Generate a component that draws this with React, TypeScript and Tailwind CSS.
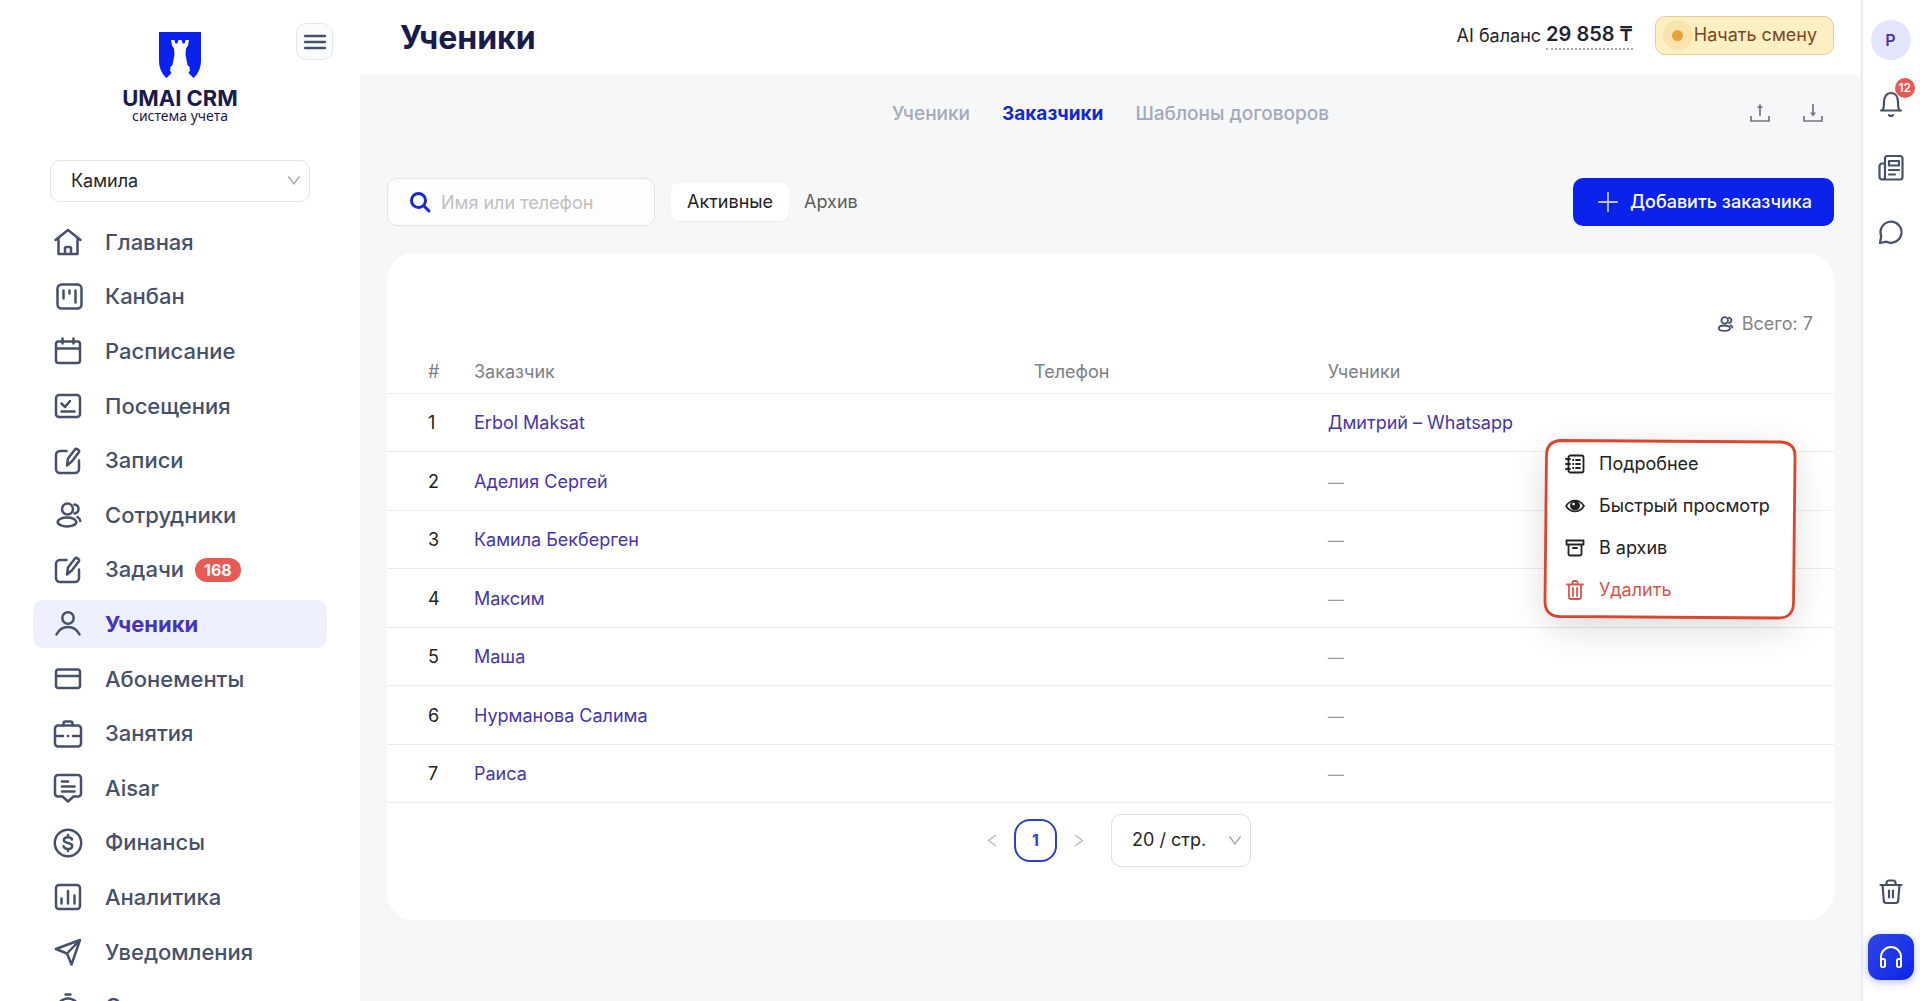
import { useState, type ReactNode } from 'react';

const NAV_ITEMS: { label: string; icon: ReactNode; badge?: number }[] = [
  {
    label: 'Главная',
    icon: <path d="M2.5 13 15 3l12.5 10M5.5 11.5V27h19V11.5M12 27v-5.5a1.5 1.5 0 0 1 1.5-1.5h3a1.5 1.5 0 0 1 1.5 1.5V27" />,
  },
  {
    label: 'Канбан',
    icon: (
      <>
        <rect x="4.5" y="2.5" width="24" height="24" rx="4" />
        <path d="M10.5 8.5v8M16.5 8.5v3M22.5 8.5v12" />
      </>
    ),
  },
  {
    label: 'Расписание',
    icon: (
      <>
        <rect x="3" y="5.5" width="24" height="21.5" rx="2.5" />
        <path d="M3 12.5h24M9.5 2.5v5M20.5 2.5v5" />
      </>
    ),
  },
  {
    label: 'Посещения',
    icon: (
      <>
        <rect x="3" y="4" width="24" height="22" rx="3" />
        <path d="m8.5 12.5 3.5 3.5 5-6M8.5 20.5h13" />
      </>
    ),
  },
  { label: 'Записи', icon: <EditPaths /> },
  { label: 'Сотрудники', icon: <UsersPaths /> },
  { label: 'Задачи', icon: <EditPaths />, badge: 168 },
  {
    label: 'Ученики',
    icon: (
      <>
        <circle cx="15" cy="9" r="5.7" />
        <path d="M3.5 25.5c2.5-5 7-7.5 11.5-7.5s9 2.5 11.5 7.5" />
      </>
    ),
  },
  {
    label: 'Абонементы',
    icon: (
      <>
        <rect x="3" y="5.5" width="24" height="18.5" rx="2.5" />
        <path d="M3 12h24" />
      </>
    ),
  },
  {
    label: 'Занятия',
    icon: (
      <>
        <rect x="2" y="6.5" width="26" height="21" rx="3" />
        <path d="M10.5 6.5V4.5a2 2 0 0 1 2-2h5a2 2 0 0 1 2 2v2M2.5 17H10M20 17h7.5M14.8 17h.4" />
      </>
    ),
  },
  {
    label: 'Aisar',
    icon: (
      <path d="M5 2h20a3 3 0 0 1 3 3v15.5a3 3 0 0 1-3 3h-4.5L15 28.5l-5.5-5H5a3 3 0 0 1-3-3V5a3 3 0 0 1 3-3ZM9 8.5h6M9 13.5h12.5M9 18.5h12.5" />
    ),
  },
  {
    label: 'Финансы',
    icon: (
      <>
        <circle cx="15" cy="15" r="13.2" />
        <path d="M19 11.5c-.5-1.5-2-2.3-4-2.3-2.5 0-4.2 1.1-4.2 2.9 0 4 8.4 1.8 8.4 5.8 0 1.9-1.8 3-4.2 3-2.200 0-3.900-.9-4.400-2.600M15 7v2M15 21v2" />
      </>
    ),
  },
  {
    label: 'Аналитика',
    icon: (
      <>
        <rect x="3" y="3" width="24" height="24" rx="3" />
        <path d="M8.5 16.5v5M15 9v12.5M21.5 13.5v8" />
      </>
    ),
  },
  {
    label: 'Уведомления',
    icon: <path d="M2.8 12 27 3l-8.500 24.500-4.500-11L2.800 12ZM14 16.500 27 3" />,
  },
  {
    label: 'Смены',
    icon: (
      <>
        <circle cx="15" cy="17.5" r="11" />
        <path d="M12.5 2.5h5M15 11v6.500" />
      </>
    ),
  },
];

const CUSTOMERS = [
  { name: 'Erbol Maksat', student: 'Дмитрий – Whatsapp' },
  { name: 'Аделия Сергей' },
  { name: 'Камила Бекберген' },
  { name: 'Максим' },
  { name: 'Маша' },
  { name: 'Нурманова Салима' },
  { name: 'Раиса' },
];

function EditPaths() {
  return (
    <>
      <path d="M13.5 5H7a4 4 0 0 0-4 4v14a4 4 0 0 0 4 4h15a4 4 0 0 0 4-4v-8.5" />
      <path d="m15 12.5 6.8-8.8q1.2-1.4 2.6-.4l1 .8q1.400 1 .3 2.500L18.800 15.500 14 19.500l1-7Z" />
    </>
  );
}

function UsersPaths() {
  return (
    <>
      <circle cx="14.5" cy="9" r="5.500" />
      <ellipse cx="14" cy="22" rx="9.300" ry="4.500" />
      <path d="M21.5 4.500c2.500.5 4 2.300 4 4.500s-1.500 4-4 4.500M24.500 17c1.500.8 2.600 2.200 2.800 4" />
    </>
  );
}

function Icon({ className, children, size = 30, stroke = 2 }: { className: string; children: ReactNode; size?: number; stroke?: number }) {
  return (
    <svg
      aria-hidden="true"
      viewBox={`0 0 ${size} ${size}`}
      fill="none"
      stroke="currentColor"
      strokeWidth={stroke}
      strokeLinecap="round"
      strokeLinejoin="round"
      className={className}
    >
      {children}
    </svg>
  );
}

function Chevron({ className }: { className: string }) {
  return (
    <svg aria-hidden="true" viewBox="0 0 12 9" fill="none" stroke="currentColor" strokeWidth="1.3" className={className}>
      <path d="m.5.5 5.500 7.500L11.500.5" />
    </svg>
  );
}

function Logo() {
  return (
    <a href="#" className="mt-8 flex flex-col items-center text-[#1a1a4b]">
      <svg aria-hidden="true" viewBox="0 0 42 46" className="h-[46px] w-[42px]">
        <path
          fill="#0a22ee"
          d="M0 0h42v28c0 8-3 14-7.500 18l-5-5 1.500-2.500-.5-2 .5-1-2.500-2.500-2-10.500.5-6 2-3L30 8h-3.500l-.8 3.500h-2L22.500 8h-3l-1.200 3.500h-2L15.500 8H12l1 5.500 2 3 .5 6-2 10.500-2.500 2.500.5 1-.5 2 1.500 2.500-5 5C3 42 0 36 0 28Z"
        />
      </svg>
      <span className="mt-2.5 text-[22px] leading-5 font-bold">UMAI CRM</span>
      <span className="font-['Noto_Sans',sans-serif] text-sm leading-4">система учета</span>
    </a>
  );
}

function Sidebar() {
  return (
    <aside className="flex w-[360px] shrink-0 flex-col overflow-hidden bg-white">
      <div className="relative flex justify-center">
        <Logo />
        <button
          aria-label="Свернуть меню"
          className="absolute top-[23px] right-[27px] flex size-[37px] items-center justify-center rounded-[10px] border border-[#e4e7ec] bg-[#fafbfd] text-[#475069]"
        >
          <Icon className="size-6" size={24} stroke={2.3}>
            <path d="M2 6h20M2 12h20M2 18h20" />
          </Icon>
        </button>
      </div>
      <div className="relative mx-[50px] mt-9 shrink-0">
        <select aria-label="Филиал" className="h-[42px] w-full appearance-none rounded-[10px] border border-[#e2e2e2] bg-white px-5 text-lg text-[#262626]">
          <option>Камила</option>
        </select>
        <Chevron className="pointer-events-none absolute top-4 right-[10px] h-[9px] w-3 text-[#a6a6a6]" />
      </div>
      <nav className="mx-[33px] mt-[13px] grid min-h-[819px] shrink-0 auto-rows-fr items-center">
        {NAV_ITEMS.map(({ label, icon, badge }) => {
          const active = label === 'Ученики';
          return (
            <a
              key={label}
              href="#"
              aria-current={active ? 'page' : undefined}
              className={`flex h-12 items-center rounded-[10px] pl-5 text-[22px] ${
                active ? 'bg-[#eef0ff] font-bold text-[#4733b8]' : 'font-medium text-[#475069]'
              }`}
            >
              <Icon className="size-[30px] shrink-0 text-[#475069]" stroke={2.5}>
                {icon}
              </Icon>
              <span className="ml-[22px]">{label}</span>
              {badge && (
                <span className="ml-[11px] rounded-full bg-[#ea5a54] px-[9px] text-base leading-6 font-bold text-white">{badge}</span>
              )}
            </a>
          );
        })}
      </nav>
    </aside>
  );
}

function Header() {
  return (
    <header className="flex h-[75px] shrink-0 items-center justify-between bg-white pr-[27px] pl-10">
      <h1 className="text-[32px] font-bold text-[#1a1a4b]">Ученики</h1>
      <div className="flex h-full items-center pb-[5px] text-lg text-[#1f2430]">
        <span className="pt-0.5">AI баланс</span>
        <button className="ml-[5px] border-b-2 border-dotted border-[#a3a8b3] text-xl leading-7 font-semibold">29 858 ₸</button>
        <button className="ml-[22px] flex h-[39px] items-center rounded-[10px] border border-[#ecca8c] bg-[#fcefc3] pr-4 pl-[7px] text-[#7d4528]">
          <span className="mr-px flex size-[30px] items-center justify-center rounded-full bg-[#fae4ac]">
            <span className="size-[11px] rounded-full bg-[#e9a23b]" />
          </span>
          Начать смену
        </button>
      </div>
    </header>
  );
}

function Tabs() {
  return (
    <div className="grid h-[76px] grid-cols-[1fr_auto_1fr] items-center">
      <nav className="col-start-2 flex gap-8 pt-0.5 text-[19px] font-medium text-[#a3a9b8]">
        <a href="#">Ученики</a>
        <a href="#" aria-current="page" className="font-bold text-[#1428cf]">
          Заказчики
        </a>
        <a href="#">Шаблоны договоров</a>
      </nav>
      <div className="flex justify-end gap-[33px] pr-[11px] text-[#73767e]">
        <button aria-label="Экспорт">
          <svg aria-hidden="true" viewBox="0 0 20 20" fill="none" stroke="currentColor" strokeWidth="1.700" className="size-5">
            <path d="M1 13v5h18v-5M10 13V3" />
            <path d="M7 5h6l-3-4Z" fill="currentColor" stroke="none" />
          </svg>
        </button>
        <button aria-label="Импорт">
          <svg aria-hidden="true" viewBox="0 0 20 20" fill="none" stroke="currentColor" strokeWidth="1.700" className="size-5">
            <path d="M1 13v5h18v-5M10 1v10" />
            <path d="M7 9.500h6l-3 4Z" fill="currentColor" stroke="none" />
          </svg>
        </button>
      </div>
    </div>
  );
}

function Toolbar() {
  const [query, setQuery] = useState('');

  return (
    <div className="mt-[27px] flex h-12 items-center">
      <label className="flex h-full w-[268px] items-center rounded-[10px] border border-[#e2e4e8] bg-[#fdfdfd] pl-[21px]">
        <Icon className="size-[22px] shrink-0 text-[#1428cf]" size={22} stroke={3}>
          <circle cx="9.5" cy="9.5" r="7" />
          <path d="m15 15 5 5" />
        </Icon>
        <input
          aria-label="Имя или телефон"
          value={query}
          onChange={(e) => setQuery(e.target.value)}
          placeholder="Имя или телефон"
          className="ml-2.5 w-full min-w-0 bg-transparent pt-0.5 text-lg outline-none placeholder:text-[#bfbfbf]"
        />
      </label>
      <div className="ml-4 flex h-[38px] text-lg text-[#5c5c5c]">
        <button className="rounded-lg bg-white px-4 text-[#222222] shadow-xs">Активные</button>
        <button className="px-[15px]">Архив</button>
      </div>
      <button className="ml-auto flex h-full items-center gap-3 rounded-[10px] bg-[#0a22ea] pr-[22px] pl-[25px] text-lg font-medium text-white">
        <Icon className="size-5 text-[#b9c2ff]" size={20} stroke={1.8}>
          <path d="M10 .8v18.400M.8 10h18.400" />
        </Icon>
        Добавить заказчика
      </button>
    </div>
  );
}

function RowMenu() {
  return (
    <div className="absolute top-[187px] right-[39px] w-[250px] rounded-2xl bg-white shadow-[0_10px_36px_rgba(0,0,0,0.14)]">
      <ul role="menu" className="px-5 pt-[3px] pb-2 text-lg text-[#222222]">
        <li className="h-[42px]">
          <button role="menuitem" className="flex h-full items-center gap-3.5 whitespace-nowrap">
            <Icon className="size-5 shrink-0" size={20} stroke={1.8}>
              <rect x="3.500" y="1.500" width="15" height="17" rx="2" />
              <path d="M1 5h4M1 10h4M1 15h4M8 6h.4M8 10h.4M8 14h.4M11 6h4M11 10h4M11 14h4" />
            </Icon>
            Подробнее
          </button>
        </li>
        <li className="h-[42px]">
          <button role="menuitem" className="flex h-full items-center gap-3.5 whitespace-nowrap">
            <Icon className="size-5 shrink-0" size={20} stroke={1.6}>
              <path d="M1 10c2.500-3.800 5.500-5.500 9-5.500s6.500 1.700 9 5.500c-2.500 3.800-5.500 5.500-9 5.500S3.500 13.800 1 10Z" />
              <circle cx="10" cy="9.500" r="4.200" fill="currentColor" />
              <circle cx="8.500" cy="8" r="1.300" fill="#ffffff" stroke="none" />
            </Icon>
            Быстрый просмотр
          </button>
        </li>
        <li className="h-[42px]">
          <button role="menuitem" className="flex h-full items-center gap-3.5 whitespace-nowrap">
            <Icon className="size-5 shrink-0" size={20} stroke={1.8}>
              <path d="M1.500 2.500h17v4h-17zM3.500 6.500V16a1.500 1.500 0 0 0 1.500 1.500h10a1.500 1.500 0 0 0 1.500-1.500V6.500M8 10h4" />
            </Icon>
            В архив
          </button>
        </li>
        <li className="h-[42px]">
          <button role="menuitem" className="flex h-full items-center gap-3.5 whitespace-nowrap text-[#d9534f]">
            <Icon className="size-5 shrink-0" size={20} stroke={1.8}>
              <path d="M2 4.500h16M4 4.500V17.500a1.500 1.500 0 0 0 1.500 1.500h9a1.500 1.500 0 0 0 1.500-1.500V4.500M7.500 4.500V2.500a1.500 1.500 0 0 1 1.500-1.500h2a1.500 1.500 0 0 1 1.500 1.500v2M8 8v8M12 8v8" />
            </Icon>
            Удалить
          </button>
        </li>
      </ul>
      {/* hand-drawn highlight round the menu */}
      <svg aria-hidden="true" viewBox="0 0 254 181" preserveAspectRatio="none" fill="none" className="pointer-events-none absolute -inset-x-0.5 -inset-y-px h-[181px] w-[254px]">
        <path d="M18 1.500 238 3q14 1 14 14l-1.500 148q-1 14-15 14L16 177.500q-14-1-14-15L3.500 15q1-13 14.500-13.500Z" stroke="#db452c" strokeWidth="2.800" />
      </svg>
    </div>
  );
}

function Pagination() {
  return (
    <div className="mt-2.5 flex h-[54px] items-center justify-center pl-4">
      <button aria-label="Назад" disabled className="text-[#b8b8b8]">
        <Chevron className="h-[9px] w-3 rotate-90" />
      </button>
      <button aria-current="page" className="mx-4 size-[43px] rounded-2xl border-2 border-[#2b3fd0] text-base font-bold text-[#2b3fd0]">
        1
      </button>
      <button aria-label="Вперёд" disabled className="text-[#b8b8b8]">
        <Chevron className="h-[9px] w-3 -rotate-90" />
      </button>
      <div className="relative ml-[26px]">
        <select aria-label="Строк на странице" className="h-[53px] w-[140px] appearance-none rounded-[10px] border border-[#e0e0e0] bg-white px-5 text-lg text-[#262626]">
          <option>20 / стр.</option>
        </select>
        <Chevron className="pointer-events-none absolute top-[22px] right-[10px] h-[9px] w-3 text-[#a6a6a6]" />
      </div>
    </div>
  );
}

function CustomersCard() {
  return (
    <section className="relative mt-[27px] rounded-[27px] bg-white pt-14 pb-[53px]">
      <div className="flex h-7 items-center justify-end gap-2 pt-0.5 pr-[21px] text-lg text-[#858585]">
        <Icon className="size-[18px] text-[#475069]" stroke={3}>
          <UsersPaths />
        </Icon>
        Всего: 7
      </div>
      <table className="mt-3 h-[454px] w-full table-fixed text-left text-lg text-[#222222]">
        <thead>
          <tr className="h-11 border-b border-[#ececee] text-[#7b7f87]">
            <th className="w-[87px] pt-0.5 pl-[41px] font-normal">#</th>
            <th className="w-[38.7%] pt-0.5 font-normal">Заказчик</th>
            <th className="w-[20.3%] pt-0.5 font-normal">Телефон</th>
            <th className="pt-0.5 font-normal">Ученики</th>
          </tr>
        </thead>
        <tbody>
          {CUSTOMERS.map(({ name, student }, i) => (
            <tr key={name} className="border-b border-[#ececee]">
              <td className="pt-0.5 pl-[41px]">{i + 1}</td>
              <td className="pt-0.5">
                <a href="#" className="text-[#4733b0]">
                  {name}
                </a>
              </td>
              <td />
              <td className="pt-0.5">
                {student ? (
                  <a href="#" className="text-[#4733b0]">
                    {student}
                  </a>
                ) : (
                  <span className="text-base text-[#9a9a9a]">—</span>
                )}
              </td>
            </tr>
          ))}
        </tbody>
      </table>
      <Pagination />
      <RowMenu />
    </section>
  );
}

function Rail() {
  return (
    <aside className="flex w-[59px] shrink-0 flex-col items-center border-l-2 border-[#ebedf0] bg-white pt-5 pr-0.5 pb-[21px] text-[#475069]">
      <button aria-label="Профиль" className="size-10 rounded-full bg-[#e2e5fd] text-base font-semibold text-[#4733b8]">
        P
      </button>
      <button aria-label="Уведомления" className="relative mt-[30px]">
        <Icon className="size-7" size={28} stroke={2.2}>
          <path d="M4 20.500h20M5.500 20.500c1.500-2.500 1.500-5 1.500-8.500 0-5 2.500-9 7-9s7 4 7 9c0 3.500 0 6 1.500 8.500M12 25.200c.8 1.200 3.200 1.200 4 0" />
        </Icon>
        <span className="absolute -top-3 left-[18px] rounded-full bg-[#ea5a54] px-1 text-xs leading-5 font-semibold text-white">12</span>
      </button>
      <button aria-label="Новости" className="mt-9">
        <Icon className="size-7" size={28} stroke={2.2}>
          <path d="M8 4.500A2.500 2.500 0 0 1 10.500 2H23a2.500 2.500 0 0 1 2.500 2.500V23a2.500 2.500 0 0 1-2.500 2.500H5A2.500 2.500 0 0 1 2.500 23V12A2.500 2.500 0 0 1 5 9.500h3M8 4.500V23a2.500 2.500 0 0 1-2.500 2.500M12 7h10v4.500H12zM12 16h10M12 20.500h6" />
        </Icon>
      </button>
      <button aria-label="Чат" className="mt-9">
        <Icon className="size-7" size={28} stroke={2.2}>
          <path d="M3 25l1.200-7A10.500 10.500 0 1 1 9.500 23.700L3 25Z" />
        </Icon>
      </button>
      <button aria-label="Корзина" className="mt-auto">
        <Icon className="size-7" size={28} stroke={2.2}>
          <path d="M3.500 7h21M5.500 7l1.300 15.500A2.500 2.500 0 0 0 9.300 25h9.400a2.500 2.500 0 0 0 2.500-2.500L22.500 7M9.500 7V5A2.500 2.500 0 0 1 12 2.500h4A2.500 2.500 0 0 1 18.500 5v2M12 12.500v7M16 12.500v7" />
        </Icon>
      </button>
      <button aria-label="Поддержка" className="mt-7 flex size-[46px] items-center justify-center rounded-xl bg-linear-to-br from-[#2f45e6] to-[#0a22ea] text-white shadow-[0_2px_8px_rgba(10,34,234,0.3)]">
        <Icon className="size-6" size={24} stroke={2}>
          <path d="M2 20v-8a10 10 0 0 1 20 0v8M2 14h2.500a1.500 1.500 0 0 1 1.500 1.500v5A1.500 1.500 0 0 1 4.500 22h-1A1.500 1.500 0 0 1 2 20.500ZM22 14h-2.500a1.500 1.500 0 0 0-1.500 1.500v5a1.500 1.500 0 0 0 1.500 1.500h1a1.500 1.500 0 0 0 1.500-1.500Z" />
        </Icon>
      </button>
    </aside>
  );
}

export default function App() {
  return (
    <div className="flex h-screen overflow-hidden bg-[#f5f7f9] font-['Inter',sans-serif]">
      <Sidebar />
      <div className="flex min-w-0 flex-1 flex-col">
        <Header />
        <main className="flex-1 overflow-hidden px-[27px]">
          <Tabs />
          <Toolbar />
          <CustomersCard />
        </main>
      </div>
      <Rail />
    </div>
  );
}
